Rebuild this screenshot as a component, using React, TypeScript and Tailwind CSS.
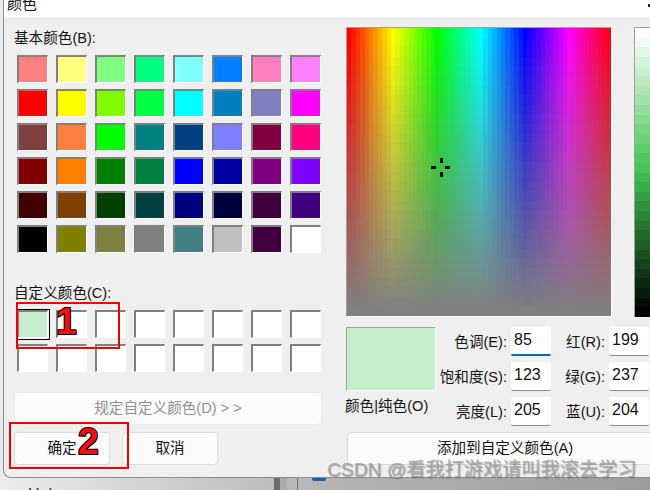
import React from 'react';

const BASIC = [
  '#ff8080', '#ffff80', '#80ff80', '#00ff80', '#80ffff', '#0080ff', '#ff80c0', '#ff80ff',
  '#ff0000', '#ffff00', '#80ff00', '#00ff40', '#00ffff', '#0080c0', '#8080c0', '#ff00ff',
  '#804040', '#ff8040', '#00ff00', '#008080', '#004080', '#8080ff', '#800040', '#ff0080',
  '#800000', '#ff8000', '#008000', '#008040', '#0000ff', '#0000a0', '#800080', '#8000ff',
  '#400000', '#804000', '#004000', '#004040', '#000080', '#000040', '#400040', '#400080',
  '#000000', '#808000', '#808040', '#808080', '#408080', '#c0c0c0', '#400040', '#ffffff',
];

const COLS = 60;
const ROWS = 30;

const Swatch = ({ color }: { color: string }) => (
  <div
    className="w-[31px] h-[28px] border-t-2 border-l-2 border-r border-b border-t-[#808080] border-l-[#808080] border-r-white border-b-white"
    style={{ backgroundColor: color }}
  />
);

const Spectrum = () => {
  const cells = [];
  for (let y = 0; y < ROWS; y++) {
    for (let x = 0; x < COLS; x++) {
      const sat = 100 - (y / (ROWS - 1)) * 100;
      cells.push(<rect key={`${x}-${y}`} x={x} y={y} width={1.02} height={1.02} fill={`hsl(${(x / COLS) * 360} ${sat}% 50%)`} />);
    }
  }
  return (
    <svg viewBox={`0 0 ${COLS} ${ROWS}`} preserveAspectRatio="none" shapeRendering="crispEdges" className="block w-full h-full">
      {cells}
    </svg>
  );
};

const LumBar = () => {
  const cells = [];
  for (let y = 0; y < ROWS; y++) {
    cells.push(<rect key={y} x={0} y={y} width={1} height={1.02} fill={`hsl(127.5 51% ${100 - (y / (ROWS - 1)) * 100}%)`} />);
  }
  return (
    <svg viewBox={`0 0 1 ${ROWS}`} preserveAspectRatio="none" shapeRendering="crispEdges" className="block w-full h-full">
      {cells}
    </svg>
  );
};

const Field = ({ label, value, active }: { label: string; value: string; active?: boolean }) => (
  <div className="flex items-center justify-end h-[29px]">
    <span className="text-[14.6px] leading-none whitespace-nowrap mr-[4px] mt-[2px]">{label}</span>
    <div className={`w-[40px] h-[29px] shrink-0 bg-white rounded-[2px] pl-[3px] text-[16px] leading-[26px] ${active ? 'border-b-2 border-b-[#0067c0]' : 'border-b border-b-[#8a8a8a]'}`}>
      {value}
    </div>
  </div>
);

const Btn = ({ children, className }: { children?: React.ReactNode; className: string }) => (
  <div className={`h-[33px] flex items-center justify-center rounded-[4px] bg-[#fbfbfb] border border-[#dcdcdc] text-[14.6px] ${className}`}>
    {children}
  </div>
);

export default function App() {
  return (
    <div className="relative w-[650px] h-[490px] overflow-hidden bg-gradient-to-r from-[#ececec] via-[#b4b4b4] to-[#9c9c9c] text-[#111] font-['Liberation_Sans','Noto_Sans_CJK_SC',sans-serif]">
      {/* window behind the dialog */}
      <div className="absolute left-[28px] top-[486px] text-[16px] leading-[18px] text-[#1c2a44]">Help</div>
      <div className="absolute left-[274px] top-[477px] w-[6px] h-[13px] bg-[#6c6c6c]" />
      <div className="absolute left-[280px] top-[477px] w-[7px] h-[13px] bg-[#a9a9a9]" />
      <div className="absolute left-[297px] top-[477px] w-px h-[13px] bg-[#707070]" />
      <div className="absolute left-[312px] top-[477px] w-[14px] h-[4px] rounded-b-[2px] bg-[#1f5fa8]" />

      {/* dialog */}
      <div className="relative w-[650px] h-[478px] ml-[3px] border-l border-b border-[#8c8c8c] rounded-bl-[8px] bg-[#efefef] overflow-hidden">
        <div className="h-[17px] bg-white text-[15px] leading-[8px] pl-[3px] overflow-hidden">颜色</div>
        <div className="flex">
          {/* left column */}
          <div className="w-[342px] shrink-0 pl-[10px]">
            <div className="text-[14.6px] leading-[18px] mt-[12px]">基本颜色(B):</div>
            <div className="grid grid-cols-[repeat(8,31px)] gap-x-[8px] gap-y-[6px] mt-[8px] ml-[3px]">
              {BASIC.map((c, i) => <Swatch key={i} color={c} />)}
            </div>
            <div className="text-[14.6px] leading-[18px] mt-[31px]">自定义颜色(C):</div>
            <div className="grid grid-cols-[repeat(8,31px)] gap-x-[8px] gap-y-[6px] mt-[8px] ml-[3px]">
              {Array.from({ length: 16 }).map((_, i) => <Swatch key={i} color={i === 0 ? '#c7edcc' : '#ffffff'} />)}
            </div>
            <Btn className="w-[308px] mt-[20px] bg-[#f3f3f3] border-[#e8e8e8] text-[#8f8f8f]">规定自定义颜色(D) &gt; &gt;</Btn>
            <div className="flex gap-[12px] mt-[7px]">
              <Btn className="w-[96px]">确定</Btn>
              <Btn className="w-[96px]">取消</Btn>
            </div>
          </div>
          {/* right column */}
          <div className="flex-1 min-w-0">
            <div className="flex mt-[10px]">
              <div className="w-[266px] h-[290px] shrink-0 border-t border-l border-r border-b border-t-[#a0a0a0] border-l-[#a0a0a0] border-r-white border-b-white">
                <Spectrum />
              </div>
              <div className="w-[20px] h-[290px] shrink-0 ml-[22px] border-t border-l border-[#a0a0a0]">
                <LumBar />
              </div>
            </div>
            <div className="flex mt-[10px]">
              <div className="w-[90px] shrink-0">
                <div className="h-[64px] bg-[#c7edcc] border-t border-l border-r border-b border-t-[#a0a0a0] border-l-[#a0a0a0] border-r-white border-b-white" />
                <div className="text-[14.6px] leading-[18px] mt-[6px] -ml-[1px] whitespace-nowrap">颜色|纯色(O)</div>
              </div>
              <div className="w-[115px] shrink-0 flex flex-col gap-[6px]">
                <Field label="色调(E):" value="85" active />
                <Field label="饱和度(S):" value="123" />
                <Field label="亮度(L):" value="205" />
              </div>
              <div className="w-[98px] shrink-0 flex flex-col gap-[6px]">
                <Field label="红(R):" value="199" />
                <Field label="绿(G):" value="237" />
                <Field label="蓝(U):" value="204" />
              </div>
            </div>
            <Btn className="w-[316px] mt-[6px] ml-[1px]">添加到自定义颜色(A)</Btn>
          </div>
        </div>
      </div>

      {/* close button corner */}
      <div className="absolute left-[648px] top-[4px] w-[2px] h-[3px] bg-[#222]" />

      {/* selection marker on first custom swatch */}
      <div className="absolute left-[17px] top-[309px] w-[33px] h-[31px] border-t border-r border-b border-black" />

      {/* crosshair on spectrum */}
      <svg className="absolute left-[431px] top-[158px]" width="20" height="20" viewBox="0 0 20 20">
        <rect x="9" y="0" width="3" height="5" fill="#000" />
        <rect x="9" y="14" width="3" height="5" fill="#000" />
        <rect x="0" y="8" width="5" height="3" fill="#000" />
        <rect x="14" y="8" width="5" height="3" fill="#000" />
      </svg>

      {/* hand-drawn annotations */}
      <div className="absolute left-[16px] top-[302px] w-[104px] h-[47px] border-2 border-[#f00000]" />
      <div className="absolute left-[9px] top-[422px] w-[120px] h-[47px] border-2 border-[#f00000]" />
      <div className="absolute left-[56px] top-[302px] text-[37px] leading-[40px] font-bold text-[#ee1111] [-webkit-text-stroke:2px_#000] [paint-order:stroke_fill] [text-shadow:1px_1px_0_#000]">1</div>
      <div className="absolute left-[78px] top-[422px] text-[37px] leading-[40px] font-bold text-[#ee1111] [-webkit-text-stroke:2px_#000] [paint-order:stroke_fill] [text-shadow:1px_1px_0_#000]">2</div>

      {/* watermark */}
      <div className="absolute left-[327px] top-[459px] text-[19.2px] leading-[22px] whitespace-nowrap text-[#a0a0a0]/80 [text-shadow:1px_1px_1px_rgba(70,70,70,0.45)]">CSDN @看我打游戏请叫我滚去学习</div>
    </div>
  );
}
